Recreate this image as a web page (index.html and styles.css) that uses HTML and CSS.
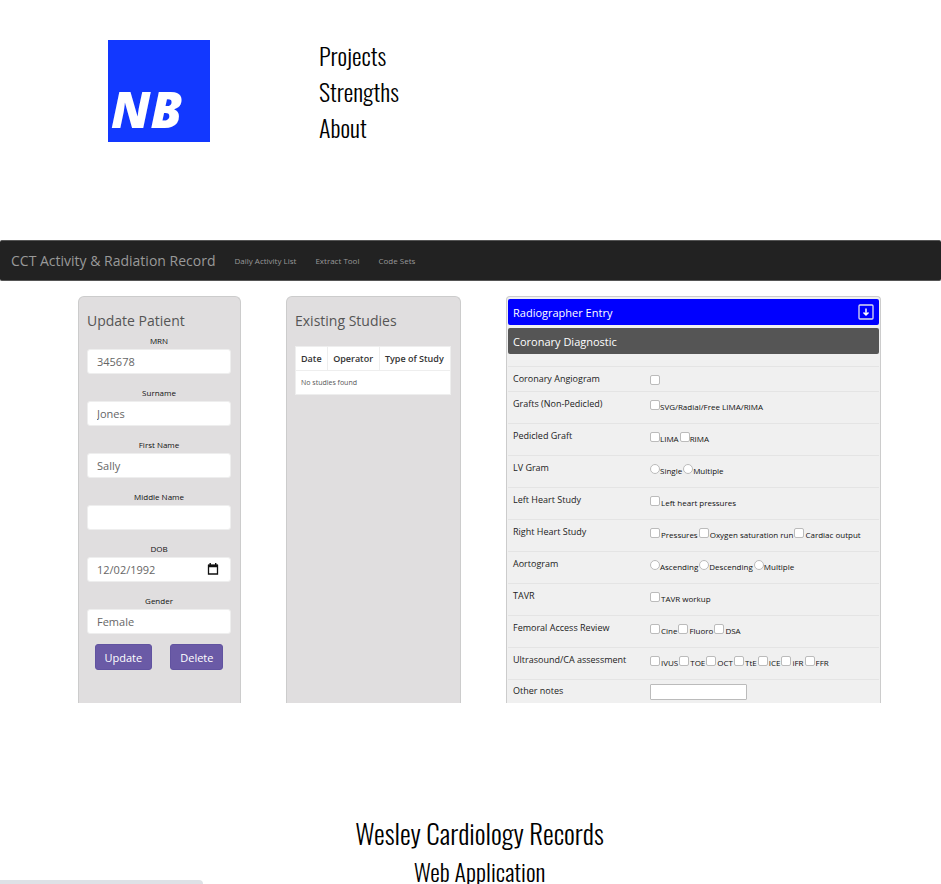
FILE: index.html
```html
<!DOCTYPE html>
<html lang="en">
<head>
<meta charset="utf-8">
<meta name="viewport" content="width=device-width, initial-scale=1">
<title>NB</title>
<link rel="stylesheet" href="styles.css">
</head>
<body>
<header class="site-header">
  <a class="logo" href="#">NB</a>
  <nav class="site-nav">
    <a href="#">Projects</a>
    <a href="#">Strengths</a>
    <a href="#">About</a>
  </nav>
</header>
<main>
  <section class="app">
    <nav class="app-bar">
      <a class="brand" href="#">CCT Activity &amp; Radiation Record</a>
      <a href="#">Daily Activity List</a>
      <a href="#">Extract Tool</a>
      <a href="#">Code Sets</a>
    </nav>
    <div class="panels">
      <form class="panel">
        <h2>Update Patient</h2>
        <div class="field"><label for="mrn">MRN</label><input id="mrn" type="text" value="345678"></div>
        <div class="field"><label for="surname">Surname</label><input id="surname" type="text" value="Jones"></div>
        <div class="field"><label for="first">First Name</label><input id="first" type="text" value="Sally"></div>
        <div class="field"><label for="middle">Middle Name</label><input id="middle" type="text"></div>
        <div class="field date"><label for="dob">DOB</label><input id="dob" type="text" value="12/02/1992">
          <svg class="calendar" viewBox="0 0 12 12" aria-hidden="true"><path d="M1.5 2.5h9v8.5h-9z" fill="none" stroke="#111" stroke-width="1.3"/><path d="M1 1.5h10v2.7H1zM2.5 0h1.4v2H2.5zM8 0h1.4v2H8z" fill="#111"/></svg>
        </div>
        <div class="field"><label for="gender">Gender</label><input id="gender" type="text" value="Female"></div>
        <div class="actions"><button type="button">Update</button><button type="button">Delete</button></div>
      </form>
      <section class="panel">
        <h2>Existing Studies</h2>
        <table class="studies">
          <thead><tr><th>Date</th><th>Operator</th><th>Type of Study</th></tr></thead>
          <tbody><tr><td colspan="3">No studies found</td></tr></tbody>
        </table>
      </section>
      <form class="entry">
        <div class="bar bar-blue">Radiographer Entry
          <button type="button" class="collapse" aria-label="Collapse"><svg viewBox="0 0 16 16"><rect x="1" y="1" width="14" height="14" rx="1" fill="none" stroke="#dde" stroke-width="1.3"/><path d="M8 4.5v6.5M5.5 8.5l2.5 2.5 2.5-2.5" fill="none" stroke="#fff" stroke-width="1.5"/></svg></button>
        </div>
        <div class="bar bar-grey">Coronary Diagnostic</div>
        <div class="rows">
          <div class="row short"><label class="name" for="angio">Coronary Angiogram</label><div class="options"><input id="angio" type="checkbox"></div></div>
          <div class="row"><span class="name">Grafts (Non-Pedicled)</span><div class="options tight"><label><input type="checkbox">SVG/Radial/Free LIMA/RIMA</label></div></div>
          <div class="row"><span class="name">Pedicled Graft</span><div class="options tight"><label><input type="checkbox">LIMA</label><label><input type="checkbox">RIMA</label></div></div>
          <div class="row"><span class="name">LV Gram</span><div class="options tight"><label><input type="radio" name="lv">Single</label><label><input type="radio" name="lv">Multiple</label></div></div>
          <div class="row"><span class="name">Left Heart Study</span><div class="options"><label><input type="checkbox">Left heart pressures</label></div></div>
          <div class="row"><span class="name">Right Heart Study</span><div class="options"><label><input type="checkbox">Pressures</label><label><input type="checkbox">Oxygen saturation run</label><label><input type="checkbox">Cardiac output</label></div></div>
          <div class="row"><span class="name">Aortogram</span><div class="options tight"><label><input type="radio" name="ao">Ascending</label><label><input type="radio" name="ao">Descending</label><label><input type="radio" name="ao">Multiple</label></div></div>
          <div class="row"><span class="name">TAVR</span><div class="options"><label><input type="checkbox">TAVR workup</label></div></div>
          <div class="row"><span class="name">Femoral Access Review</span><div class="options"><label><input type="checkbox">Cine</label><label><input type="checkbox">Fluoro</label><label><input type="checkbox">DSA</label></div></div>
          <div class="row"><span class="name">Ultrasound/CA assessment</span><div class="options"><label><input type="checkbox">IVUS</label><label><input type="checkbox">TOE</label><label><input type="checkbox">OCT</label><label><input type="checkbox">TtE</label><label><input type="checkbox">ICE</label><label><input type="checkbox">iFR</label><label><input type="checkbox">FFR</label></div></div>
          <div class="row last"><label class="name" for="notes">Other notes</label><input id="notes" class="notes" type="text"></div>
        </div>
      </form>
    </div>
  </section>
  <section class="caption">
    <h1>Wesley Cardiology Records</h1>
    <p>Web Application</p>
  </section>
</main>
<div class="status"></div>
</body>
</html>
```
FILE: styles.css
```css
* { box-sizing: border-box; }
html { height: 100%; overflow: hidden; }
body {
  margin: 0;
  height: 100%;
  overflow: hidden;
  background: #fff;
  color: #000;
  font-family: Oswald, "Roboto Condensed", "Liberation Sans Narrow", "Open Sans", sans-serif;
  font-weight: 300;
}
a { color: inherit; text-decoration: none; }
input, button { font: inherit; margin: 0; }

.site-header {
  display: flex;
  align-items: center;
  gap: 109px;
  padding: 40px 108px 39px;
  margin-bottom: 59px;
}
.logo {
  display: flex;
  align-items: flex-end;
  width: 102px;
  height: 102px;
  padding: 0 3px 8px;
  background: #1238ff;
  color: #fff;
  font: italic 800 50px/50px "Open Sans", sans-serif;
}
.site-nav { display: flex; flex-direction: column; margin: -4px 0; font-size: 24px; line-height: 36px; }

.app { font-family: "Open Sans", sans-serif; font-weight: 400; }
.app-bar {
  display: flex;
  align-items: center;
  gap: 19px;
  height: 41px;
  padding: 0 11px;
  border: 1px solid #555;
  border-width: 1px 0;
  border-radius: 2px;
  background: #222;
  color: #999;
  font-size: 8px;
}
.brand { font-size: 14px; }

.panels {
  display: grid;
  grid-template-columns: 163fr 175fr 375fr;
  gap: 45px;
  padding: 15px 60px 0 78px;
}
.panel {
  padding: 13px 9px 31px 8px;
  border: 1px solid #ccc;
  border-bottom: 0;
  border-radius: 6px 6px 0 0;
  background: #e0dedf;
}
.panel h2 { margin: 0; font-size: 14px; line-height: 22px; font-weight: 400; color: #555; }

.field { display: flex; flex-direction: column; margin-bottom: 10px; }
.field label { font-size: 8px; line-height: 17px; text-align: center; color: #111; }
.field input {
  width: 100%;
  height: 25px;
  padding: 0 9px;
  border: 1px solid #eee;
  border-radius: 3px;
  background: #fff;
  color: #666;
  font-size: 11px;
}
.field.date { position: relative; }
.calendar { position: absolute; right: 12px; bottom: 7px; width: 12px; height: 12px; }
.actions { display: flex; justify-content: center; gap: 18px; }
.actions button {
  height: 26px;
  padding: 0 9px;
  border: 1px solid #6153a0;
  border-radius: 3px;
  background: #6a5aa6;
  color: #fff;
  font-size: 11px;
}

.studies { width: 100%; margin-top: 14px; border-collapse: collapse; background: #fff; }
.studies th, .studies td { height: 24px; padding: 0 5px; border: 1px solid #eee; text-align: left; white-space: nowrap; }
.studies th { font-size: 9px; font-weight: 600; color: #333; }
.studies td { font-size: 7px; color: #555; }

.entry {
  padding: 2px 1px 0;
  border: 1px solid #ccc;
  border-bottom: 0;
  border-radius: 4px 4px 0 0;
  background: #f0f0f0;
}
.bar {
  display: flex;
  align-items: center;
  justify-content: space-between;
  height: 26px;
  margin-bottom: 3px;
  padding: 0 5px;
  border-radius: 2px;
  color: #fff;
  font-size: 11px;
}
.bar-blue { background: #00f; }
.bar-grey { background: #555; }
.collapse { width: 16px; height: 16px; padding: 0; border: 0; background: none; }
.collapse svg { display: block; }
.rows { margin-top: 12px; }
.row {
  display: grid;
  grid-template-columns: 137px 1fr;
  align-items: start;
  height: 32px;
  padding: 5px 5px 0;
  border-top: 1px solid #e4e4e4;
}
.row.short { height: 25px; }
.row.last { height: 24px; padding-top: 4px; }
.name { font-size: 9px; line-height: 14px; font-weight: 500; color: #222; white-space: nowrap; }
.options { display: flex; gap: 1px; padding-top: 3px; font-size: 8px; line-height: 10px; color: #111; white-space: nowrap; }
.options label { display: flex; align-items: baseline; gap: 1px; }
.options.tight label { gap: 0; }
.options input {
  appearance: none;
  flex: none;
  width: 10px;
  height: 10px;
  border: 1px solid #bbb;
  border-radius: 2px;
  background: #fff;
}
.options input[type="radio"] { border-radius: 50%; }
.notes { width: 97px; height: 16px; padding: 0 2px; border: 1px solid #bbb; border-radius: 1px; background: #fff; font-size: 8px; }

.caption { padding: 110px 0 0 18px; text-align: center; }
.caption h1 { margin: 0; font-size: 27px; line-height: 40px; font-weight: 300; }
.caption p { margin: 0; font-size: 24px; line-height: 36px; }
.status { position: fixed; left: 0; bottom: 0; width: 203px; height: 4px; border-radius: 0 4px 0 0; background: #dee1e6; }
```
